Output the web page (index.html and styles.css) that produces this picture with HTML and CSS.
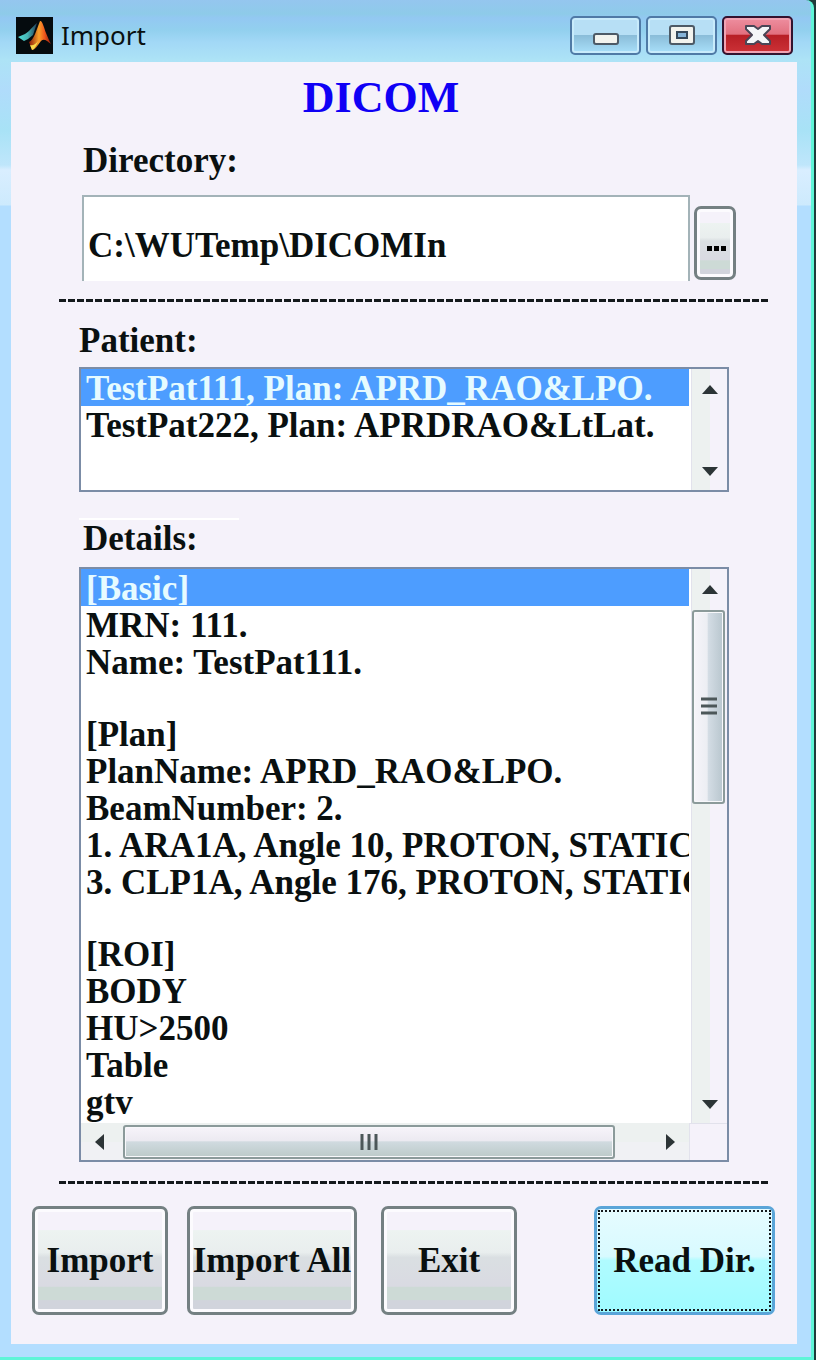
FILE: index.html
```html
<!DOCTYPE html>
<html lang="en">

<head>
    <meta charset="UTF-8">
    <meta name="viewport" content="width=device-width, initial-scale=1.0">
    <title>Import</title>
    <link rel="stylesheet" href="styles.css">
</head>

<body>
    <div class="window">
        <header class="titlebar">
            <svg class="app-icon" viewBox="0 0 37 37" aria-hidden="true">
                <defs>
                    <linearGradient id="peak" x1="0" y1="0" x2="1" y2="0">
                        <stop offset="0" stop-color="#8a1a08" />
                        <stop offset=".45" stop-color="#f9a12c" />
                        <stop offset=".7" stop-color="#f0591c" />
                        <stop offset="1" stop-color="#8e180c" />
                    </linearGradient>
                    <linearGradient id="wing" x1="0" y1="0" x2="1" y2="0">
                        <stop offset="0" stop-color="#4fe0d8" />
                        <stop offset=".5" stop-color="#47b5b4" />
                        <stop offset="1" stop-color="#1f3a56" />
                    </linearGradient>
                </defs>
                <rect width="37" height="37" fill="#050b0e" />
                <path d="M2 20L9 17C13 15 16 10 21 6L17 18L12 22L8 24Z" fill="url(#wing)" />
                <path d="M24 4C26 3 28 10 30 16C32 21 34 25 35 27C31 24 28 21 25 24C22 28 19 33 16 33L13 25C18 23 20 14 24 4Z" fill="url(#peak)" />
                <path d="M14 28C17 29 20 27 22 24C21 28 18 33 16 33Z" fill="#f8d94a" />
            </svg>
            <span class="caption">Import</span>
            <div class="window-controls">
                <button type="button" class="win-btn" aria-label="Minimize">
                    <svg width="28" height="22" viewBox="0 0 28 22">
                        <rect x="2" y="10" width="24" height="10" rx="2" fill="#f2f3ee" stroke="#4d5a66" stroke-width="2" />
                    </svg>
                </button>
                <button type="button" class="win-btn" aria-label="Maximize">
                    <svg width="28" height="22" viewBox="0 0 28 22">
                        <rect x="2" y="2" width="24" height="18" rx="2" fill="#f2f3ee" stroke="#4d5a66" stroke-width="2" />
                        <rect x="9" y="8" width="10" height="6" fill="#86b4d8" stroke="#35485a" stroke-width="2" />
                    </svg>
                </button>
                <button type="button" class="win-btn win-close" aria-label="Close">
                    <svg width="28" height="22" viewBox="0 0 28 22">
                        <path d="M2 2H10L14 5L18 2H26V5L20 11L26 17V20H18L14 17L10 20H2V17L8 11L2 5Z" fill="#f4f6f8" stroke="#4a4656" stroke-width="2" stroke-linejoin="round" />
                    </svg>
                </button>
            </div>
        </header>

        <form class="client" action="./" method="POST">
            <h1>DICOM</h1>

            <div class="field">
                <label for="directory">Directory:</label>
                <div class="dir-row">
                    <input type="text" id="directory" name="directory" value="C:\WUTemp\DICOMIn">
                    <button type="button" class="btn btn-browse" aria-label="Browse">
                        <svg width="20" height="6" viewBox="0 0 20 6">
                            <path d="M0 0H5V5H0ZM7 0H12V5H7ZM14 0H19V5H14Z" />
                        </svg>
                    </button>
                </div>
            </div>

            <hr>

            <div class="field field-patient">
                <label for="patient">Patient:</label>
                <div class="listbox">
                    <select id="patient" name="patient" size="3">
                        <option selected>TestPat111, Plan: APRD_RAO&amp;LPO.</option>
                        <option>TestPat222, Plan: APRDRAO&amp;LtLat.</option>
                    </select>
                    <div class="vbar" aria-hidden="true">
                        <svg class="arrow" width="16" height="9" viewBox="0 0 16 9"><path d="M0 9L8 0L16 9Z" /></svg>
                        <svg class="arrow" width="16" height="9" viewBox="0 0 16 9"><path d="M0 0H16L8 9Z" /></svg>
                    </div>
                </div>
            </div>

            <div class="field field-details">
                <label for="details">Details:</label>
                <div class="listbox">
                    <select id="details" name="details" size="15">
                        <option selected>[Basic]</option>
                        <option>MRN: 111.</option>
                        <option>Name: TestPat111.</option>
                        <option class="blank"></option>
                        <option>[Plan]</option>
                        <option>PlanName: APRD_RAO&amp;LPO.</option>
                        <option>BeamNumber: 2.</option>
                        <option>1. ARA1A, Angle 10, PROTON, STATIC</option>
                        <option>3. CLP1A, Angle 176, PROTON, STATIC</option>
                        <option class="blank"></option>
                        <option>[ROI]</option>
                        <option>BODY</option>
                        <option>HU&gt;2500</option>
                        <option>Table</option>
                        <option>gtv</option>
                    </select>
                    <div class="vbar" aria-hidden="true">
                        <svg class="arrow" width="16" height="9" viewBox="0 0 16 9"><path d="M0 9L8 0L16 9Z" /></svg>
                        <div class="vtrack">
                            <div class="vthumb">
                                <svg width="18" height="20" viewBox="0 0 18 20"><path d="M1 2H17M1 9H17M1 16H17" /></svg>
                            </div>
                        </div>
                        <svg class="arrow" width="16" height="9" viewBox="0 0 16 9"><path d="M0 0H16L8 9Z" /></svg>
                    </div>
                    <div class="hbar" aria-hidden="true">
                        <svg class="arrow" width="9" height="16" viewBox="0 0 9 16"><path d="M9 0V16L0 8Z" /></svg>
                        <div class="htrack">
                            <div class="hthumb">
                                <svg width="20" height="18" viewBox="0 0 20 18"><path d="M3 1V17M10 1V17M17 1V17" /></svg>
                            </div>
                        </div>
                        <svg class="arrow" width="9" height="16" viewBox="0 0 9 16"><path d="M0 0V16L9 8Z" /></svg>
                    </div>
                    <div class="corner"></div>
                </div>
            </div>

            <hr>

            <div class="actions">
                <button type="submit" class="btn">Import</button>
                <button type="button" class="btn btn-all">Import All</button>
                <button type="button" class="btn">Exit</button>
                <button type="button" class="btn btn-read"><span>Read Dir.</span></button>
            </div>
        </form>
    </div>
</body>

</html>
```
FILE: styles.css
```css
*,
*::before,
*::after {
    box-sizing: border-box;
}

body {
    margin: 0;
    padding-right: 2px;
    background-color: #1f3b3a;
    color: #0a1010;
    font-family: "Liberation Serif", "Times New Roman", serif;
    font-weight: bold;
    font-size: 35px;
    line-height: 40px;
}

/* window frame */
.window {
    min-height: 100vh;
    padding: 0 14px 13px 11px;
    border: solid #5ff5d8;
    border-width: 0 3px 3px 0;
    border-top-right-radius: 8px;
    background: linear-gradient(#95c6ef 0, #8ecbe9 14px, #93c8f2 18px, #92d0ee 30px, #a2d8f6 42px, #ade3f6 60px, #b0dcfb 90px, #a8e2f6 130px, #bfe6fb 165px, #d9eeff 170px, #cdeafd 205px, #b3deff 206px);
}

.titlebar {
    display: flex;
    align-items: center;
    height: 62px;
    padding: 8px 4px 0 5px;
}

.app-icon {
    width: 37px;
    height: 37px;
}

.caption {
    margin-left: 8px;
    font-family: "Noto Sans", sans-serif;
    font-weight: normal;
    font-size: 26px;
}

.window-controls {
    display: flex;
    gap: 5px;
    margin-left: auto;
}

.win-btn {
    display: flex;
    align-items: center;
    justify-content: center;
    width: 71px;
    height: 39px;
    padding: 0;
    border: 2px solid #4f7aa6;
    border-radius: 5px;
    background: linear-gradient(#b7dff5 48%, #8bbdd9 50%, #a9e0fa);
    box-shadow: inset 0 0 0 2px #c8ebfb;
}

.win-close {
    border-color: #33132f;
    background: linear-gradient(#ee8fa0, #e2707f 46%, #b81f26 50%, #cc3237);
    box-shadow: inset 0 0 0 2px #f0a3b3;
}

/* client area */
.client {
    padding: 10px 0 29px;
    background-color: #f5f2fa;
}

h1 {
    margin: 0 46px 17px 0;
    color: #0f00f5;
    font-size: 44px;
    line-height: 52px;
    text-align: center;
}

.field {
    padding: 0 68px;
}

label {
    display: block;
    padding-left: 4px;
}

.dir-row {
    display: flex;
    align-items: flex-start;
    gap: 4px;
    margin: 14px -7px 18px 3px;
}

input {
    flex: 1;
    min-width: 0;
    height: 86px;
    padding: 14px 4px 0;
    border: 2px solid #a3b3b8;
    border-bottom: 0;
    background-color: #fff;
    color: inherit;
    font: inherit;
    outline: none;
}

hr {
    height: 3px;
    margin: 0 27px 0 48px;
    border: 0;
    background: repeating-linear-gradient(90deg, #14191c 0, #14191c 7px, transparent 7px, transparent 9px);
}

.field-patient {
    padding-top: 19px;
}

.field-patient label {
    padding-left: 0;
}

.field-details {
    padding-top: 26px;
    padding-bottom: 19px;
}

.field-details label {
    width: 160px;
    border-top: 2px solid #fff;
    line-height: 38px;
}

.listbox {
    display: grid;
    grid-template-columns: 1fr 36px;
    column-gap: 2px;
    margin-top: 6px;
    border: 2px solid #7b8ca6;
    background-color: #fff;
}

.field-details .listbox {
    margin-top: 9px;
}

select {
    display: block;
    width: 100%;
    min-width: 0;
    height: 121px;
    padding: 0;
    border: 0;
    border-radius: 0;
    background-color: #fff;
    color: inherit;
    font: inherit;
    overflow: hidden;
    outline: none;
}

#details {
    height: 554px;
}

option {
    height: 37px;
    min-height: 0;
    padding: 0 0 0 5px;
    font-weight: bold;
    line-height: 37px;
    white-space: nowrap;
}

option.blank {
    height: 35px;
}

option:checked {
    background: #4d9dff linear-gradient(#4d9dff, #4d9dff);
    -webkit-text-fill-color: #e6fbff;
}

/* scrollbars */
.vbar {
    display: flex;
    flex-direction: column;
    align-items: center;
    justify-content: space-between;
    padding: 16px 0 14px;
    border-left: 1px solid #e2e2ec;
    background: linear-gradient(90deg, #edf1f0 50%, #f5f2fa 52%);
}

.arrow {
    flex: none;
    fill: #2c3436;
}

.vtrack,
.htrack {
    flex: 1;
}

.vtrack {
    width: 100%;
    padding: 16px 2px 16px 0;
}

.vthumb,
.hthumb {
    display: flex;
    align-items: center;
    justify-content: center;
    border: 2px solid #8b9a9a;
    border-radius: 3px;
    box-shadow: inset 0 0 0 1px #f8f8fb;
}

.vthumb {
    height: 41%;
    background: linear-gradient(90deg, #f6f4fa, #eceef3 45%, #d3dce4 50%, #b8c6ce);
}

.vthumb svg,
.hthumb svg {
    fill: none;
    stroke: #4c5759;
    stroke-width: 3;
}

.hbar {
    display: flex;
    align-items: center;
    height: 37px;
    padding: 0 14px;
    background: linear-gradient(#edf1f0 50%, #f0f1f4 52%);
}

.htrack {
    padding: 0 51px 0 19px;
}

.hthumb {
    height: 34px;
    background: linear-gradient(#f7f4fa, #eceaf1 45%, #d0dadf 50%, #bccac9);
}

.corner {
    margin-left: -2px;
    border: solid #e2e2ec;
    border-width: 1px 0 0 1px;
    background-color: #f5f2fa;
}

/* buttons */
.btn {
    display: flex;
    align-items: center;
    justify-content: center;
    width: 136px;
    height: 109px;
    padding: 0;
    border: 3px solid #748082;
    border-radius: 7px;
    background: linear-gradient(#f5f2fa 20%, #edf3f1 21%, #e9eeee 42%, #dadfe2 47%, #d9dae2 75%, #cddad6 76%, #cddad6 88%, #d1d4dc 89%);
    box-shadow: inset 0 0 0 3px #fcfbfe;
    color: inherit;
    font: inherit;
    white-space: nowrap;
}

.btn-browse {
    width: 42px;
    height: 74px;
    margin-top: 11px;
    padding: 12px 0 0 4px;
}

.actions {
    display: flex;
    padding: 22px 22px 0 21px;
}

.btn-all {
    width: 170px;
    margin: 0 24px 0 19px;
}

.btn-read {
    width: 181px;
    margin-left: auto;
    padding: 1px;
    border-color: #5aa5d8;
    background: linear-gradient(#e6fcff, #d8faff 46%, #b0fbff 50%, #9ffbff);
    box-shadow: none;
}

.btn-read span {
    display: flex;
    align-items: center;
    justify-content: center;
    width: 100%;
    height: 100%;
    border: 2px dotted #14191c;
}
```
